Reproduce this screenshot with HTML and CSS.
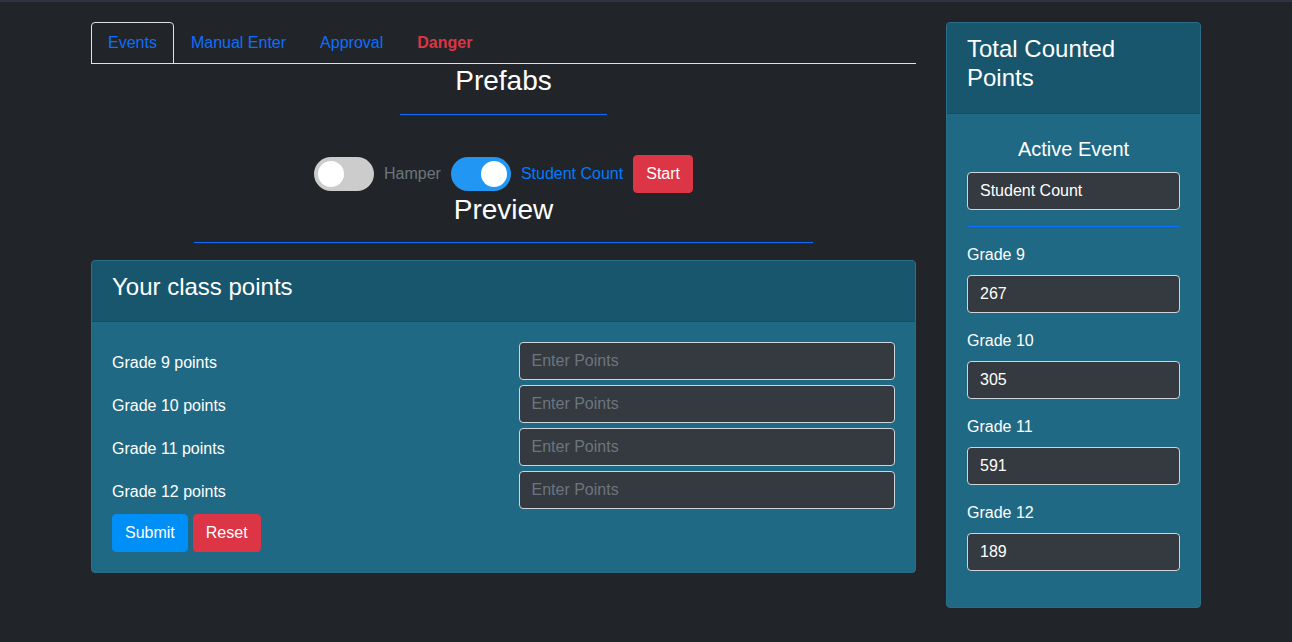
FILE: index.html
```html
<!DOCTYPE html>
<html>
<head>
<meta charset="utf-8">
<link rel="stylesheet" href="styles.css">
</head>
<body>
<div class="topbar"></div>
<div class="container">
  <div class="main">
    <ul class="tabs">
      <li class="tab active">Events</li>
      <li class="tab">Manual Enter</li>
      <li class="tab">Approval</li>
      <li class="tab danger">Danger</li>
    </ul>
    <h3 class="section-title">Prefabs</h3>
    <hr class="blue-rule rule-short">
    <div class="prefabs">
      <span class="switch"><span class="knob"></span></span>
      <span class="switch-label">Hamper</span>
      <span class="switch on"><span class="knob"></span></span>
      <span class="switch-label on">Student Count</span>
      <button class="btn btn-danger">Start</button>
    </div>
    <h3 class="section-title">Preview</h3>
    <hr class="blue-rule rule-long">
    <div class="card">
      <div class="card-header"><h4>Your class points</h4></div>
      <div class="card-body">
        <div class="points-row"><span class="points-label">Grade 9 points</span><input class="field" placeholder="Enter Points"></div>
        <div class="points-row"><span class="points-label">Grade 10 points</span><input class="field" placeholder="Enter Points"></div>
        <div class="points-row"><span class="points-label">Grade 11 points</span><input class="field" placeholder="Enter Points"></div>
        <div class="points-row"><span class="points-label">Grade 12 points</span><input class="field" placeholder="Enter Points"></div>
        <div class="actions">
          <button class="btn btn-primary">Submit</button>
          <button class="btn btn-danger">Reset</button>
        </div>
      </div>
    </div>
  </div>
  <div class="side">
    <div class="card">
      <div class="card-header tall"><h4>Total Counted Points</h4></div>
      <div class="card-body">
        <h5 class="active-title">Active Event</h5>
        <input class="field full" value="Student Count">
        <hr class="blue-rule rule-full">
        <div class="group"><label>Grade 9</label><input class="field full" value="267"></div>
        <div class="group"><label>Grade 10</label><input class="field full" value="305"></div>
        <div class="group"><label>Grade 11</label><input class="field full" value="591"></div>
        <div class="group"><label>Grade 12</label><input class="field full" value="189"></div>
      </div>
    </div>
  </div>
</div>
</body>
</html>
```

FILE: styles.css
```css
* { box-sizing: border-box; }
html, body { margin: 0; padding: 0; }
body {
  background: #212529;
  color: #fff;
  font-family: "Liberation Sans", Arial, sans-serif;
  font-size: 16px;
  line-height: 1.5;
  height: 642px;
  overflow: hidden;
}
.topbar { height: 2px; background: #303244; }
.container {
  width: 1140px;
  margin: 0 auto;
  padding: 20px 15px 0;
  display: flex;
  gap: 30px;
}
.main { width: 825px; }
.side { width: 255px; }

.tabs {
  list-style: none;
  margin: 0;
  padding: 0;
  display: flex;
  border-bottom: 1px solid #dee2e6;
}
.tab {
  padding: 8px 16px;
  border: 1px solid transparent;
  border-radius: 4px 4px 0 0;
  color: #0d6efd;
  margin-bottom: -1px;
}
.tab.active { border-color: #dee2e6; }
.tab.danger { color: #dc3545; font-weight: bold; }

.section-title {
  margin: 0;
  font-size: 28px;
  font-weight: normal;
  line-height: 34px;
  text-align: center;
}
.blue-rule {
  border: 0;
  border-top: 1px solid #0d6efd;
  height: 0;
}
.rule-short { width: 25%; margin: 16px auto 40px; }
.rule-long { width: 75%; margin: 15px auto 17px; }
.rule-full { width: 100%; margin: 16px 0; }

.prefabs {
  display: flex;
  align-items: center;
  justify-content: center;
  gap: 10px;
  height: 38px;
}
.switch {
  position: relative;
  width: 60px;
  height: 34px;
  border-radius: 17px;
  background: #ccc;
  display: inline-block;
}
.switch.on { background: #2196f3; }
.knob {
  position: absolute;
  top: 4px;
  left: 4px;
  width: 26px;
  height: 26px;
  border-radius: 50%;
  background: #fff;
}
.switch.on .knob { left: 30px; }
.switch-label { color: #6c757d; }
.switch-label.on { color: #007bff; }

.btn {
  font-family: inherit;
  font-size: 16px;
  line-height: 24px;
  padding: 6px 12px;
  border: 1px solid transparent;
  border-radius: 4px;
  color: #fff;
}
.btn-danger { background: #dc3545; border-color: #dc3545; }
.btn-primary { background: #008ff7; border-color: #008ff7; }

.card {
  background: #1f6984;
  border: 1px solid #2a6f88;
  border-radius: 4px;
}
.card-header {
  background: #17566d;
  padding: 11px 20px 12px;
  border-bottom: 1px solid #134b60;
  border-radius: 3px 3px 0 0;
}
.card-header.tall { padding-bottom: 13px; }
.card-header h4 {
  margin: 0 0 8px;
  font-size: 24px;
  font-weight: normal;
  line-height: 29px;
}
.card-body { padding: 20px; }

.points-row {
  display: grid;
  grid-template-columns: 1fr 1fr;
  column-gap: 30px;
  align-items: center;
  margin-bottom: 5px;
}
.points-label { padding-top: 4px; }
.points-row .field { width: 100%; }

.field {
  height: 38px;
  padding: 6px 12px;
  font-family: inherit;
  font-size: 16px;
  color: #fff;
  background: #343a40;
  border: 1px solid #ced4da;
  border-radius: 4px;
  min-width: 0;
}
.field::placeholder { color: #6c757d; }
.field.full { width: 100%; display: block; }

.actions { display: flex; gap: 5px; }

.active-title {
  margin: 3px 0 11px;
  font-size: 20px;
  font-weight: normal;
  line-height: 24px;
  text-align: center;
}
.group { margin-bottom: 16px; }
.group label { display: inline-block; margin-bottom: 8px; }
```
